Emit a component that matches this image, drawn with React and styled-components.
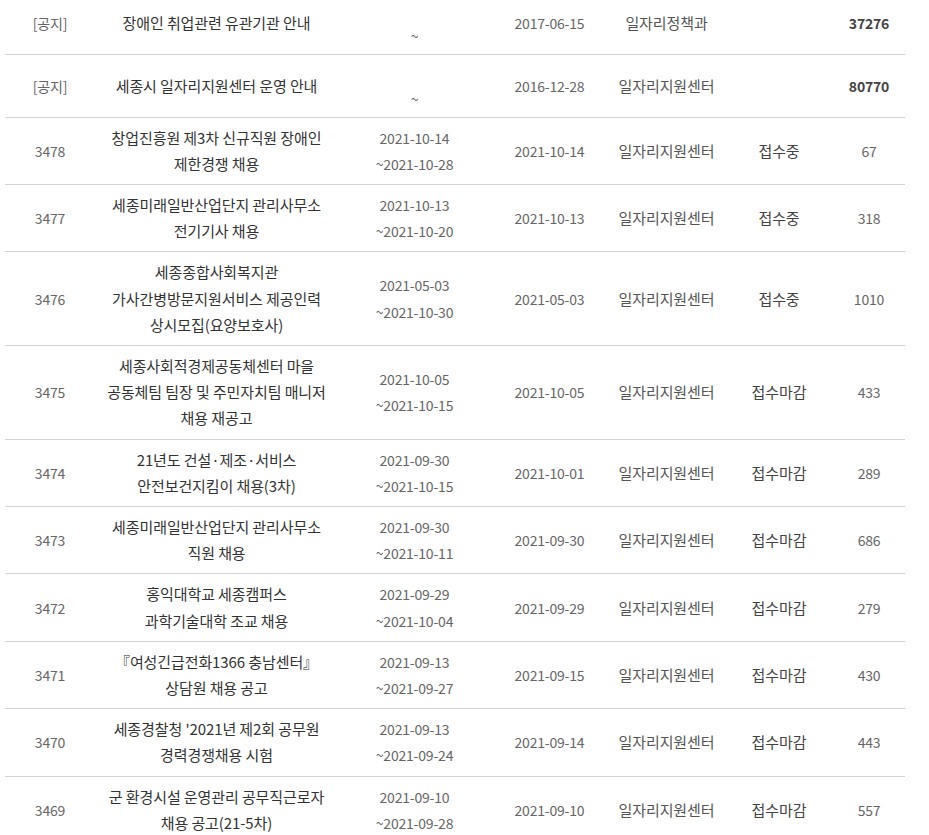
import React from 'react';
import styled, { createGlobalStyle } from 'styled-components';

const GlobalStyle = createGlobalStyle`
  html, body {
    margin: 0;
    padding: 0;
    background: #fff;
    overflow: hidden;
  }
  body {
    font-family: "Noto Sans CJK KR", "Noto Sans", sans-serif;
  }
`;

const Page = styled.div`
  padding: 0 24px 0 5px;
`;

const Board = styled.table`
  width: 900px;
  margin-top: -8px;
  border-collapse: collapse;
  table-layout: fixed;
  font-size: 14px;
`;

const Row = styled.tr`
  border-bottom: 1px solid #d3d3d3;
`;

// $text: 한글 위주 칸은 조금 크게
const Cell = styled.td`
  padding: ${(p) => (p.$notice ? '4.7px 0' : '7px 0')};
  text-align: center;
  vertical-align: middle;
  line-height: 26.2px;
  font-size: ${(p) => (p.$text ? '15px' : '14px')};
  letter-spacing: ${(p) => (p.$text ? '-0.1px' : '-0.2px')};
  color: ${(p) => p.$color || '#666'};
  font-weight: ${(p) => (p.$bold ? 700 : 400)};
  white-space: nowrap;
`;

const Line = styled.span`
  display: block;
`;

// 게시판 컬럼 폭 (10/27/17/13/13/12/8 %)
const cols = ['10%', '27%', '17%', '13%', '13%', '12%', '8%'];

const notices = [
  { title: ['장애인 취업관련 유관기관 안내'], date: '2017-06-15', dept: '일자리정책과', views: '37276' },
  { title: ['세종시 일자리지원센터 운영 안내'], date: '2016-12-28', dept: '일자리지원센터', views: '80770' },
];

const posts = [
  { no: 3478, title: ['창업진흥원 제3차 신규직원 장애인', '제한경쟁 채용'], from: '2021-10-14', to: '2021-10-28', date: '2021-10-14', status: '접수중', views: 67 },
  { no: 3477, title: ['세종미래일반산업단지 관리사무소', '전기기사 채용'], from: '2021-10-13', to: '2021-10-20', date: '2021-10-13', status: '접수중', views: 318 },
  { no: 3476, title: ['세종종합사회복지관', '가사간병방문지원서비스 제공인력', '상시모집(요양보호사)'], from: '2021-05-03', to: '2021-10-30', date: '2021-05-03', status: '접수중', views: 1010 },
  { no: 3475, title: ['세종사회적경제공동체센터 마을', '공동체팀 팀장 및 주민자치팀 매니저', '채용 재공고'], from: '2021-10-05', to: '2021-10-15', date: '2021-10-05', status: '접수마감', views: 433 },
  { no: 3474, title: ['21년도 건설·제조·서비스', '안전보건지킴이 채용(3차)'], from: '2021-09-30', to: '2021-10-15', date: '2021-10-01', status: '접수마감', views: 289 },
  { no: 3473, title: ['세종미래일반산업단지 관리사무소', '직원 채용'], from: '2021-09-30', to: '2021-10-11', date: '2021-09-30', status: '접수마감', views: 686 },
  { no: 3472, title: ['홍익대학교 세종캠퍼스', '과학기술대학 조교 채용'], from: '2021-09-29', to: '2021-10-04', date: '2021-09-29', status: '접수마감', views: 279 },
  { no: 3471, title: ['『여성긴급전화1366 충남센터』', '상담원 채용 공고'], from: '2021-09-13', to: '2021-09-27', date: '2021-09-15', status: '접수마감', views: 430 },
  { no: 3470, title: ["세종경찰청 '2021년 제2회 공무원", '경력경쟁채용 시험'], from: '2021-09-13', to: '2021-09-24', date: '2021-09-14', status: '접수마감', views: 443 },
  { no: 3469, title: ['군 환경시설 운영관리 공무직근로자', '채용 공고(21-5차)'], from: '2021-09-10', to: '2021-09-28', date: '2021-09-10', status: '접수마감', views: 557 },
];

const Lines = ({ items }) => items.map((t, i) => <Line key={i}>{t}</Line>);

const App = () => {
  return (
    <Page>
      <GlobalStyle />
      <Board>
        <colgroup>
          {cols.map((w, i) => (
            <col key={i} style={{ width: w }} />
          ))}
        </colgroup>
        <tbody>
          {notices.map((n) => (
            <Row key={n.views}>
              <Cell $notice>[공지]</Cell>
              <Cell $notice $text $color="#333">
                <Lines items={n.title} />
              </Cell>
              <Cell $notice>
                <Lines items={['\u00a0', '~']} />
              </Cell>
              <Cell $notice>{n.date}</Cell>
              <Cell $notice $text $color="#555">{n.dept}</Cell>
              <Cell $notice />
              <Cell $notice $bold $color="#444">{n.views}</Cell>
            </Row>
          ))}
          {posts.map((p) => (
            <Row key={p.no}>
              <Cell>{p.no}</Cell>
              <Cell $text $color="#333">
                <Lines items={p.title} />
              </Cell>
              <Cell>
                <Lines items={[p.from, '~' + p.to]} />
              </Cell>
              <Cell>{p.date}</Cell>
              <Cell $text $color="#555">일자리지원센터</Cell>
              <Cell $text $color="#444">{p.status}</Cell>
              <Cell>{p.views}</Cell>
            </Row>
          ))}
        </tbody>
      </Board>
    </Page>
  );
};

export default App;
